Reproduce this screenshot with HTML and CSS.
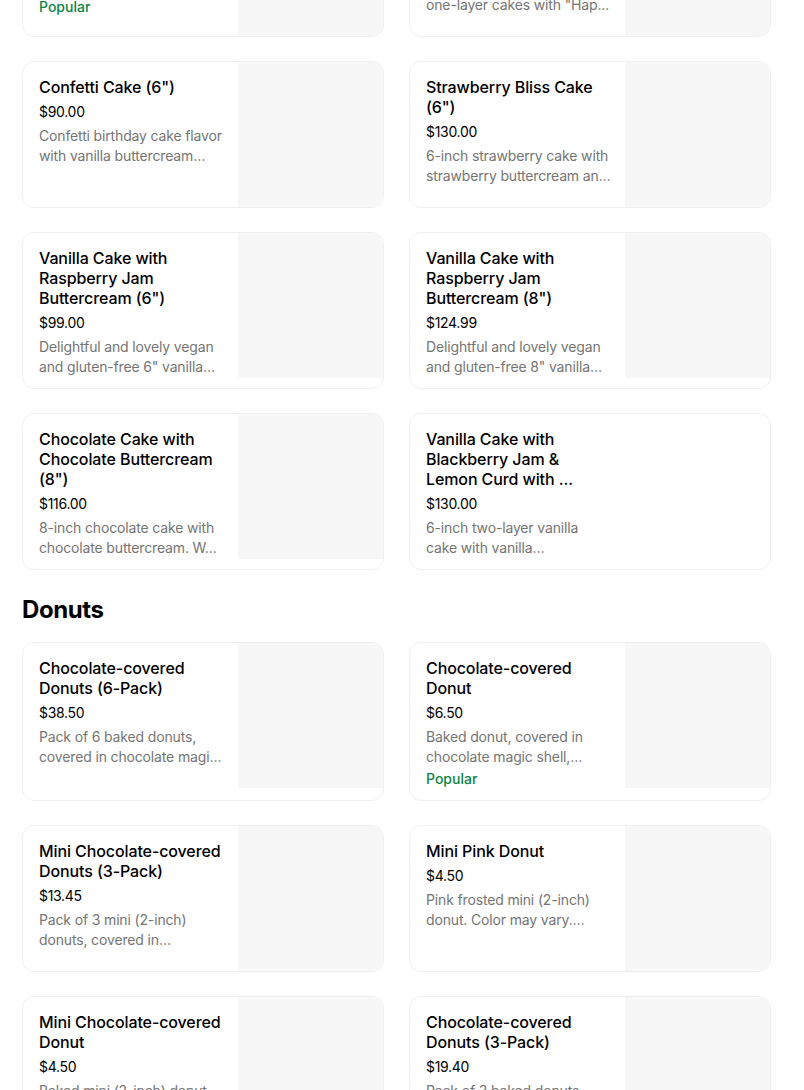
FILE: index.html
```html
<!DOCTYPE html>
<html lang="en">
<head>
<meta charset="utf-8">
<title>Menu</title>
<link rel="stylesheet" href="styles.css">
</head>
<body>
<main class="menu">
  <section class="section section-scrolled">
    <div class="grid">
      <div class="card">
        <div class="info">
          <div class="title">Chocolate Cake (6")</div>
          <div class="price">$90.00</div>
          <div class="desc">6-inch chocolate cake with chocolate buttercream and chocolate ganache drip.</div>
          <div class="tag">Popular</div>
        </div>
        <div class="thumb"></div>
      </div>
      <div class="card">
        <div class="info">
          <div class="title">Custom Happy Birthday Cake (6")</div>
          <div class="price">$80.00</div>
          <div class="desc">Choose from our classic one-layer cakes with "Hap...</div>
        </div>
        <div class="thumb"></div>
      </div>
      <div class="card">
        <div class="info">
          <div class="title">Confetti Cake (6")</div>
          <div class="price">$90.00</div>
          <div class="desc">Confetti birthday cake flavor with vanilla buttercream frosting and rainbow sprinkles.</div>
        </div>
        <div class="thumb"></div>
      </div>
      <div class="card">
        <div class="info">
          <div class="title">Strawberry Bliss Cake (6")</div>
          <div class="price">$130.00</div>
          <div class="desc">6-inch strawberry cake with strawberry buttercream and fresh strawberries.</div>
        </div>
        <div class="thumb"></div>
      </div>
      <div class="card">
        <div class="info">
          <div class="title">Vanilla Cake with Raspberry Jam Buttercream (6")</div>
          <div class="price">$99.00</div>
          <div class="desc">Delightful and lovely vegan and gluten-free 6" vanilla cake with raspberry jam buttercream.</div>
        </div>
        <div class="thumb"></div>
      </div>
      <div class="card">
        <div class="info">
          <div class="title">Vanilla Cake with Raspberry Jam Buttercream (8")</div>
          <div class="price">$124.99</div>
          <div class="desc">Delightful and lovely vegan and gluten-free 8" vanilla cake with raspberry jam buttercream.</div>
        </div>
        <div class="thumb"></div>
      </div>
      <div class="card">
        <div class="info">
          <div class="title">Chocolate Cake with Chocolate Buttercream (8")</div>
          <div class="price">$116.00</div>
          <div class="desc">8-inch chocolate cake with chocolate buttercream. W...</div>
        </div>
        <div class="thumb"></div>
      </div>
      <div class="card">
        <div class="info">
          <div class="title">Vanilla Cake with Blackberry Jam &amp; Lemon Curd with ...</div>
          <div class="price">$130.00</div>
          <div class="desc">6-inch two-layer vanilla cake with vanilla buttercream, blackberry jam and lemon curd.</div>
        </div>
        <div class="thumb thumb-empty"></div>
      </div>
    </div>
  </section>

  <section class="section">
    <h2 class="section-title">Donuts</h2>
    <div class="grid">
      <div class="card">
        <div class="info">
          <div class="title">Chocolate-covered Donuts (6-Pack)</div>
          <div class="price">$38.50</div>
          <div class="desc">Pack of 6 baked donuts, covered in chocolate magic shell and sprinkles.</div>
        </div>
        <div class="thumb"></div>
      </div>
      <div class="card">
        <div class="info">
          <div class="title">Chocolate-covered Donut</div>
          <div class="price">$6.50</div>
          <div class="desc">Baked donut, covered in chocolate magic shell, sprinkled with rainbow sprinkles.</div>
          <div class="tag">Popular</div>
        </div>
        <div class="thumb"></div>
      </div>
      <div class="card">
        <div class="info">
          <div class="title">Mini Chocolate-covered Donuts (3-Pack)</div>
          <div class="price">$13.45</div>
          <div class="desc">Pack of 3 mini (2-inch) donuts, covered in chocolate magic shell.</div>
        </div>
        <div class="thumb"></div>
      </div>
      <div class="card">
        <div class="info">
          <div class="title">Mini Pink Donut</div>
          <div class="price">$4.50</div>
          <div class="desc">Pink frosted mini (2-inch) donut. Color may vary. Decorations may vary.</div>
        </div>
        <div class="thumb"></div>
      </div>
      <div class="card">
        <div class="info">
          <div class="title">Mini Chocolate-covered Donut</div>
          <div class="price">$4.50</div>
          <div class="desc">Baked mini (2-inch) donut, covered in chocolate magic shell.</div>
        </div>
        <div class="thumb"></div>
      </div>
      <div class="card">
        <div class="info">
          <div class="title">Chocolate-covered Donuts (3-Pack)</div>
          <div class="price">$19.40</div>
          <div class="desc">Pack of 3 baked donuts, covered in chocolate magic shell.</div>
        </div>
        <div class="thumb"></div>
      </div>
    </div>
  </section>
</main>
</body>
</html>
```

FILE: styles.css
```css
* {
  box-sizing: border-box;
}

html, body {
  margin: 0;
  padding: 0;
  background: #ffffff;
}

body {
  font-family: Inter, "Noto Sans", "Liberation Sans", sans-serif;
  color: #000000;
  overflow: hidden;
}

.menu {
  padding: 0 33px 0 22px;
}

.section-scrolled {
  margin-top: -110px;
}

.section-title {
  margin: 24px 0 16px;
  font-size: 24px;
  line-height: 32px;
  font-weight: 700;
  letter-spacing: -0.4px;
}

.grid {
  display: grid;
  grid-template-columns: 1fr 1fr;
  column-gap: 25px;
  row-gap: 24px;
}

.card {
  display: grid;
  grid-template-columns: 1fr 145px;
  align-items: start;
  border: 1px solid #f0f0f0;
  border-radius: 12px;
  overflow: hidden;
  background: #ffffff;
}

.info {
  padding: 15px 14px 11px 16px;
  min-width: 0;
}

.thumb {
  height: 145px;
  background: #f7f7f7;
}

.thumb-empty {
  background: transparent;
}

.title {
  font-size: 16px;
  line-height: 20px;
  font-weight: 500;
  letter-spacing: -0.1px;
  margin-bottom: 5px;
  display: -webkit-box;
  -webkit-line-clamp: 3;
  -webkit-box-orient: vertical;
  overflow: hidden;
}

.price {
  font-size: 14px;
  line-height: 20px;
  margin-bottom: 4px;
  letter-spacing: -0.3px;
}

.desc {
  font-size: 14px;
  line-height: 20px;
  color: #757575;
  letter-spacing: -0.15px;
  display: -webkit-box;
  -webkit-line-clamp: 2;
  -webkit-box-orient: vertical;
  overflow: hidden;
}

.tag {
  margin-top: 2px;
  font-size: 14px;
  line-height: 20px;
  font-weight: 500;
  color: #0e8345;
}
```
